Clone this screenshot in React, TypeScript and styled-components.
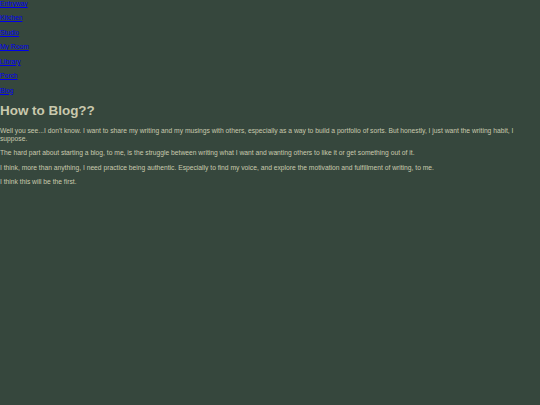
import styled, { createGlobalStyle } from "styled-components"

const GlobalStyle = createGlobalStyle`
  html, body {
    margin: 0;
    padding: 0;
    background: #36473d;
  }
  body {
    font-family: "Liberation Sans", Arial, sans-serif;
    font-size: 6.72px;
    color: #c9c9ad;
  }
`

export const Page = styled.div`
  min-height: 405px;
  background: #36473d;
`

export const Nav = styled.nav`
  display: flex;
  flex-direction: column;
  gap: 6.72px;
`

export const NavLink = styled.a`
  color: #0000ee;
  text-decoration: underline;
  line-height: 7.7px;
  align-self: flex-start;
`

export const Title = styled.h1`
  font-size: 13.44px;
  font-weight: bold;
  margin: 9px 0;
  color: #c9c9ad;
`

export const Para = styled.p`
  margin: 6.72px 0;
  line-height: 7.7px;
`

const rooms = ["Entryway", "Kitchen", "Studio", "My Room", "Library", "Porch", "Blog"]

export default function App(): JSX.Element {
  return (
    <Page>
      <GlobalStyle />
      <Nav>
        {rooms.map((room) => (
          <NavLink key={room} href="#">
            {room}
          </NavLink>
        ))}
      </Nav>
      <Title>How to Blog??</Title>
      <Para>
        Well you see...I don't know. I want to share my writing and my musings with others, especially as a way
        to build a portfolio of sorts. But honestly, I just want the writing habit, I suppose.
      </Para>
      <Para>
        The hard part about starting a blog, to me, is the struggle between writing what I want and wanting
        others to like it or get something out of it.
      </Para>
      <Para>
        I think, more than anything, I need practice being authentic. Especially to find my voice, and explore
        the motivation and fulfillment of writing, to me.
      </Para>
      <Para>I think this will be the first.</Para>
    </Page>
  )
}
